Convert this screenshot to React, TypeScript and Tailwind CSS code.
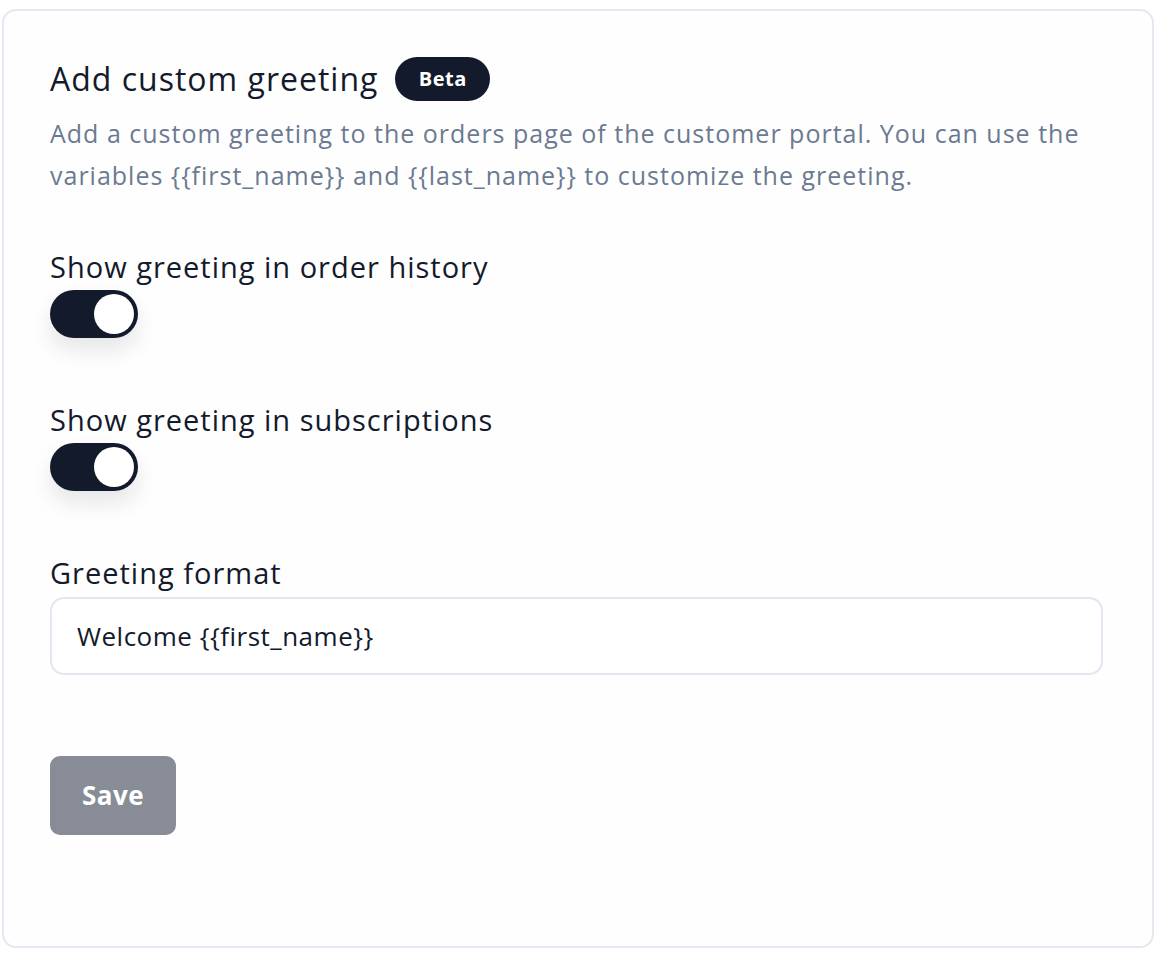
import React from "react";

function Toggle() {
  return (
    <div className="mt-[3px] w-[88px] h-[48px] rounded-full bg-[#131a2b] relative shadow-[0_12px_22px_rgba(17,24,39,0.10)]">
      <div className="absolute right-[4px] top-[4px] w-[40px] h-[40px] rounded-full bg-white" />
    </div>
  );
}

const DESC =
  "Add a custom greeting to the orders page of the customer portal. You can use the variables {{first_name}} and {{last_name}} to customize the greeting.";
const INPUT = "Welcome {{first_name}}";

export default function App() {
  const font = { fontFamily: "'Open Sans', Lato, sans-serif" };
  return (
    <div className="pl-[2px] pt-[9px] pr-[6px] bg-white" style={font}>
      <div className="h-[939px] rounded-[14px] border-2 border-[#e6e8f1] bg-[#fefefe] px-[46px] pt-[46px]">
        <div className="flex items-center gap-[17px]">
          <h1 className="text-[32px] leading-[44px] tracking-[1px] text-[#131a2b]">Add custom greeting</h1>
          <span className="h-[44px] w-[95px] rounded-full bg-[#131a2b] text-white font-bold text-[20px] tracking-[0.5px] flex items-center justify-center">
            Beta
          </span>
        </div>
        <p className="mt-[11px] text-[25px] leading-[42px] tracking-[1px] text-[#6b7a91]">{DESC}</p>
        <div className="mt-[51px] text-[29px] leading-[40px] tracking-[1px] text-[#131a2b]">Show greeting in order history</div>
        <Toggle />
        <div className="mt-[62px] text-[29px] leading-[40px] tracking-[1px] text-[#131a2b]">Show greeting in subscriptions</div>
        <Toggle />
        <div className="mt-[62px] text-[29px] leading-[40px] tracking-[1px] text-[#131a2b]">Greeting format</div>
        <div className="mt-[4px] h-[78px] w-[1053px] rounded-[14px] border-2 border-[#e3e6ef] bg-white flex items-center px-[25px] text-[26px] tracking-[0.5px] text-[#131a2b]">
          {INPUT}
        </div>
        <button className="mt-[81px] h-[79px] w-[126px] rounded-[10px] bg-[#878c96] text-white font-bold text-[26px] tracking-[0.5px]">
          Save
        </button>
      </div>
    </div>
  );
}
